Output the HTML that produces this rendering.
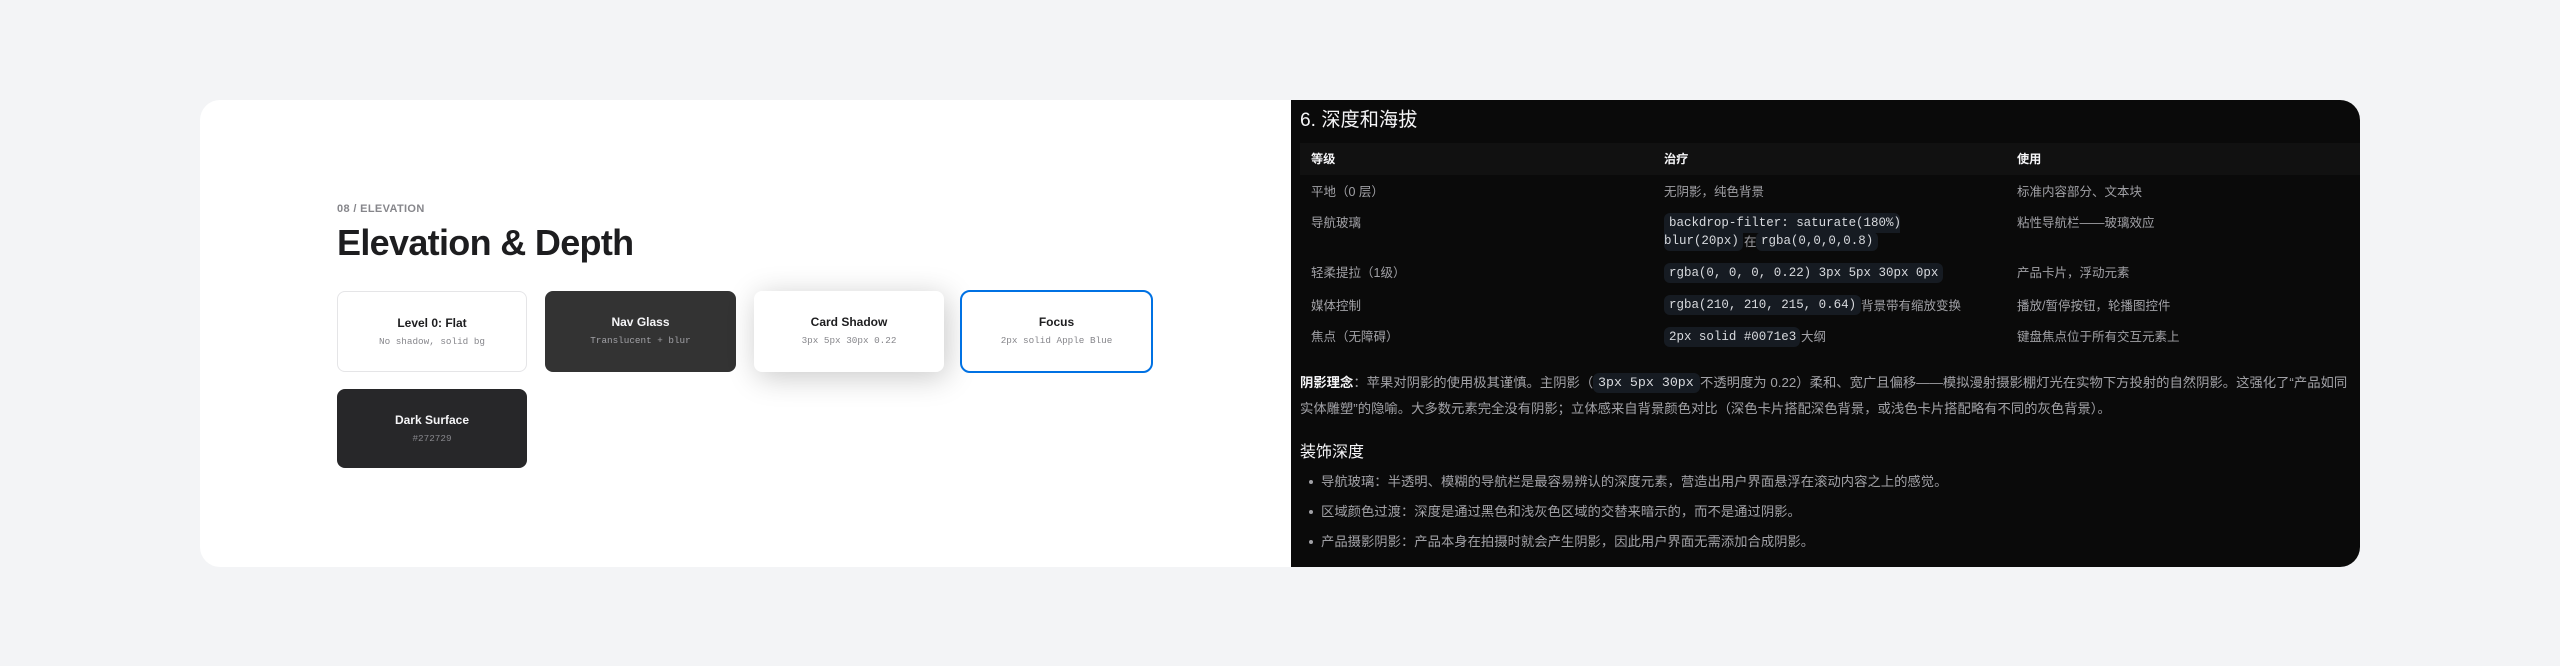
<!DOCTYPE html>
<html lang="zh-CN">
<head>
<meta charset="utf-8">
<title>Elevation &amp; Depth</title>
<style>
*{box-sizing:border-box;margin:0;padding:0}
html,body{width:2560px;height:666px;overflow:hidden;background:#f3f4f6}
body{position:relative;font-family:"Liberation Sans","Noto Sans CJK SC",sans-serif}
.wrap{position:absolute;left:200px;top:100px;width:2160px;height:467px;border-radius:20px;overflow:hidden;background:#fff}
.dark{position:absolute;left:1091px;top:0;width:1069px;height:467px;background:#0a0a0a}
.t{position:absolute;white-space:nowrap;line-height:20px;height:20px}
.card{position:absolute;border-radius:8px;background:#fff}
.ct{position:absolute;left:0;right:0;text-align:center;font-size:12px;font-weight:700;line-height:16px;white-space:nowrap}
.cs{position:absolute;left:0;right:0;text-align:center;font-family:"Liberation Mono",monospace;font-size:9.3px;line-height:14px;white-space:nowrap}
.h{font-size:12.2px;font-weight:700;color:#f5f5f7}
.b{font-size:12.5px;color:#a1a1a6}
.p{font-size:13.33px;color:#a1a1a6}
.c{position:absolute;background:#161b22;border-radius:6px;height:20px;font-family:"Liberation Mono",monospace;font-size:12.48px;line-height:20px;color:#d8dade;white-space:nowrap}
.dot{position:absolute;width:4px;height:4px;border-radius:50%;background:#a1a1a6}
</style>
</head>
<body>
<div class="wrap">
  <div class="dark"></div>
</div>

<div class="t" style="left:337px;top:199px;font-size:11px;font-weight:700;color:#86868b;letter-spacing:.35px">08 / ELEVATION</div>
<div class="t" style="left:337px;top:223px;height:40px;line-height:40px;font-size:36px;font-weight:700;color:#1d1d1f;letter-spacing:-.68px">Elevation &amp; Depth</div>

<div class="card" style="left:337px;top:291px;width:190px;height:81px;border:1px solid #e5e5e7">
  <div class="ct" style="top:23px;color:#1d1d1f">Level 0: Flat</div>
  <div class="cs" style="top:43px;color:#86868b">No shadow, solid bg</div>
</div>
<div class="card" style="left:545px;top:291px;width:191px;height:81px;background:#333">
  <div class="ct" style="top:23px;color:#f5f5f7">Nav Glass</div>
  <div class="cs" style="top:43px;color:#a1a1a6">Translucent + blur</div>
</div>
<div class="card" style="left:754px;top:291px;width:190px;height:81px;box-shadow:3px 5px 30px rgba(0,0,0,.22)">
  <div class="ct" style="top:23px;color:#1d1d1f">Card Shadow</div>
  <div class="cs" style="top:43px;color:#86868b">3px 5px 30px 0.22</div>
</div>
<div class="card" style="left:960px;top:290px;width:193px;height:83px;border:2px solid #0071e3;border-radius:10px">
  <div class="ct" style="top:22px;color:#1d1d1f">Focus</div>
  <div class="cs" style="top:42px;color:#86868b">2px solid Apple Blue</div>
</div>
<div class="card" style="left:337px;top:389px;width:190px;height:79px;background:#272729">
  <div class="ct" style="top:23px;color:#f5f5f7">Dark Surface</div>
  <div class="cs" style="top:43px;color:#86868b">#272729</div>
</div>

<div class="t" style="left:1300px;top:106px;height:30px;line-height:30px;font-size:19.2px;color:#f5f5f7">6. 深度和海拔</div>

<div style="position:absolute;left:1300px;top:143px;width:1060px;height:32px;background:#111"></div>
<div class="t h" style="left:1311px;top:149px">等级</div>
<div class="t h" style="left:1664px;top:149px">治疗</div>
<div class="t h" style="left:2017px;top:149px">使用</div>

<div class="t b" style="left:1311px;top:182px">平地（0 层）</div>
<div class="t b" style="left:1664px;top:182px">无阴影，纯色背景</div>
<div class="t b" style="left:2017px;top:182px">标准内容部分、文本块</div>

<div class="t b" style="left:1311px;top:213px">导航玻璃</div>
<div class="c" style="left:1664px;top:213px;width:236px;padding-left:5px;border-radius:6px 6px 0 0">backdrop-filter: saturate(180%)</div>
<div class="c" style="left:1664px;top:232px;width:79px;height:19px;line-height:19px;border-radius:0 0 6px 6px">blur(20px)</div>
<div class="t b" style="left:1744px;top:232px">在</div>
<div class="c" style="left:1756px;top:232px;width:122px;height:19px;line-height:19px;padding-left:5px">rgba(0,0,0,0.8)</div>
<div class="t b" style="left:2017px;top:213px">粘性导航栏——玻璃效应</div>

<div class="t b" style="left:1311px;top:263px">轻柔提拉（1级）</div>
<div class="c" style="left:1664px;top:263px;width:279px;padding-left:5px">rgba(0, 0, 0, 0.22) 3px 5px 30px 0px</div>
<div class="t b" style="left:2017px;top:263px">产品卡片，浮动元素</div>

<div class="t b" style="left:1311px;top:296px">媒体控制</div>
<div class="c" style="left:1664px;top:295px;width:197px;padding-left:5px">rgba(210, 210, 215, 0.64)</div>
<div class="t b" style="left:1861px;top:296px">背景带有缩放变换</div>
<div class="t b" style="left:2017px;top:296px">播放/暂停按钮，轮播图控件</div>

<div class="t b" style="left:1311px;top:327px">焦点（无障碍）</div>
<div class="c" style="left:1664px;top:327px;width:136px;padding-left:5px">2px solid #0071e3</div>
<div class="t b" style="left:1801px;top:327px">大纲</div>
<div class="t b" style="left:2017px;top:327px">键盘焦点位于所有交互元素上</div>

<div class="t p" style="left:1300px;top:373px"><b style="color:#f5f5f7">阴影理念</b>：苹果对阴影的使用极其谨慎。主阴影（</div>
<div class="c" style="left:1593px;top:373px;width:107px;padding-left:5px;font-size:13.3px">3px 5px 30px</div>
<div class="t p" style="left:1700px;top:373px">不透明度为 0.22）柔和、宽广且偏移——模拟漫射摄影棚灯光在实物下方投射的自然阴影。这强化了“产品如同</div>
<div class="t p" style="left:1300px;top:399px">实体雕塑”的隐喻。大多数元素完全没有阴影；立体感来自背景颜色对比（深色卡片搭配深色背景，或浅色卡片搭配略有不同的灰色背景）。</div>

<div class="t" style="left:1300px;top:443px;font-size:16px;color:#f5f5f7">装饰深度</div>

<div class="dot" style="left:1309px;top:480px"></div>
<div class="t p" style="left:1321px;top:472px">导航玻璃：半透明、模糊的导航栏是最容易辨认的深度元素，营造出用户界面悬浮在滚动内容之上的感觉。</div>
<div class="dot" style="left:1309px;top:510px"></div>
<div class="t p" style="left:1321px;top:502px">区域颜色过渡：深度是通过黑色和浅灰色区域的交替来暗示的，而不是通过阴影。</div>
<div class="dot" style="left:1309px;top:540px"></div>
<div class="t p" style="left:1321px;top:532px">产品摄影阴影：产品本身在拍摄时就会产生阴影，因此用户界面无需添加合成阴影。</div>
</body>
</html>
